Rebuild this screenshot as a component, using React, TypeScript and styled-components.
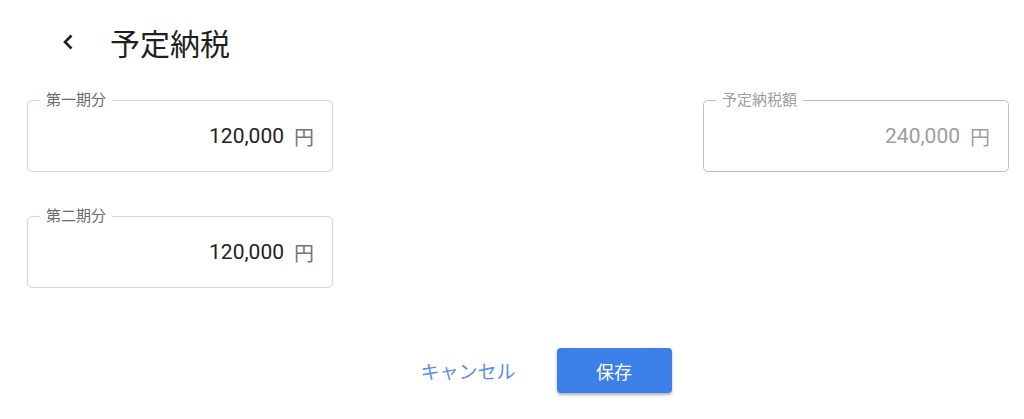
import styled, { createGlobalStyle } from "styled-components";

const GlobalStyle = createGlobalStyle`
  body {
    margin: 0;
    background: #ffffff;
    font-family: Roboto, "Noto Sans CJK JP", sans-serif;
    color: #212121;
  }
`;

type Field = {
  label: string;
  value: string;
  disabled?: boolean;
};

const firstColumn: Field[] = [
  { label: "第一期分", value: "120,000" },
  { label: "第二期分", value: "120,000" },
];

const total: Field = { label: "予定納税額", value: "240,000", disabled: true };

function AmountField({ label, value, disabled }: Field) {
  return (
    <FieldBox $disabled={disabled}>
      <Legend $disabled={disabled}>{label}</Legend>
      <ValueRow>
        <Amount $disabled={disabled}>{value}</Amount>
        <Unit $disabled={disabled}>円</Unit>
      </ValueRow>
    </FieldBox>
  );
}

export default function App() {
  return (
    <>
      <GlobalStyle />
      <Page>
        <Header>
          <BackButton aria-label="戻る">
            <svg width="12" height="16" viewBox="0 0 12 16">
              <polyline
                points="9.5,1.5 3,8 9.5,14.5"
                fill="none"
                stroke="#1f1f1f"
                strokeWidth="2.6"
              />
            </svg>
          </BackButton>
          <Title>予定納税</Title>
        </Header>

        <FormGrid>
          <Column>
            {firstColumn.map((f) => (
              <AmountField key={f.label} {...f} />
            ))}
          </Column>
          <Column>
            <AmountField {...total} />
          </Column>
        </FormGrid>

        <Actions>
          <CancelButton>キャンセル</CancelButton>
          <SaveButton>保存</SaveButton>
        </Actions>
      </Page>
    </>
  );
}

const Page = styled.div`
  width: 1024px;
  height: 419px;
  box-sizing: border-box;
  padding: 0 15px 0 27px;
`;

const Header = styled.div`
  display: flex;
  align-items: center;
  height: 84px;
  margin-bottom: 8px;
  padding-left: 34px;
`;

const BackButton = styled.button`
  display: flex;
  align-items: center;
  justify-content: center;
  width: 14px;
  height: 24px;
  padding: 0;
  margin-right: 35px;
  border: none;
  background: none;
`;

const Title = styled.h1`
  margin: 0;
  font-size: 30px;
  font-weight: 400;
  color: #1f1f1f;
`;

const FormGrid = styled.div`
  display: flex;
  justify-content: space-between;
`;

const Column = styled.div`
  display: flex;
  flex-direction: column;
  gap: 36px;
  width: 306px;
`;

const FieldBox = styled.fieldset<{ $disabled?: boolean }>`
  margin: 0;
  padding: 0 18px 0 12px;
  border: 1px solid ${(p) => (p.$disabled ? "#bdbdbd" : "#d6d6d6")};
  border-radius: 5px;
`;

const Legend = styled.legend<{ $disabled?: boolean }>`
  padding: 0 6px;
  font-size: 15px;
  line-height: 16px;
  color: ${(p) => (p.$disabled ? "#9e9e9e" : "#6b6b6b")};
`;

const ValueRow = styled.div`
  display: flex;
  justify-content: flex-end;
  align-items: center;
  gap: 10px;
  height: 56px;
  padding-bottom: 7px;
`;

const Amount = styled.span<{ $disabled?: boolean }>`
  font-size: 21px;
  color: ${(p) => (p.$disabled ? "#9e9e9e" : "#222222")};
`;

const Unit = styled.span<{ $disabled?: boolean }>`
  font-size: 20px;
  color: ${(p) => (p.$disabled ? "#9e9e9e" : "#757575")};
`;

const Actions = styled.div`
  display: flex;
  justify-content: center;
  align-items: center;
  gap: 31px;
  margin-top: 60px;
  padding-left: 46px;
`;

const CancelButton = styled.button`
  width: 115px;
  height: 45px;
  border: none;
  background: none;
  font-family: inherit;
  font-size: 19px;
  color: #5a8ef0;
`;

const SaveButton = styled.button`
  width: 115px;
  height: 45px;
  border: none;
  border-radius: 4px;
  background: #3d7fe8;
  color: #ffffff;
  font-family: inherit;
  font-size: 18px;
  box-shadow: 0 2px 3px rgba(0, 0, 0, 0.3);
`;
